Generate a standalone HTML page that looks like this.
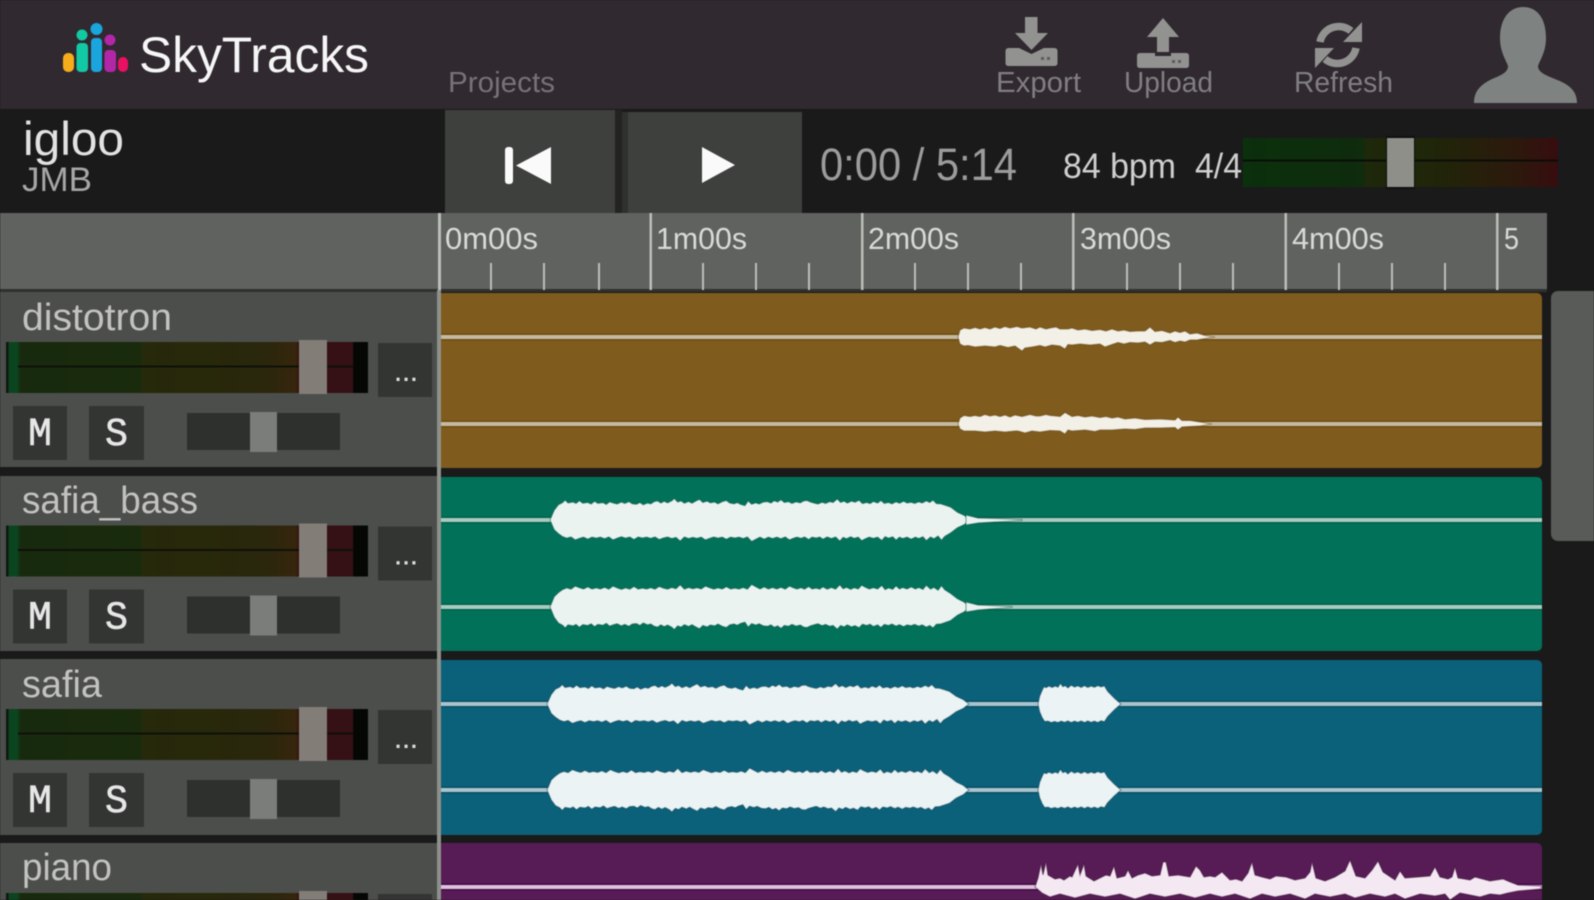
<!DOCTYPE html>
<html lang="en">
<head>
<meta charset="utf-8">
<title>SkyTracks</title>
<style>
html,body{margin:0;padding:0;background:#1a1a1a;width:1594px;height:900px;overflow:hidden}
svg{display:block;position:absolute;left:0;top:0;width:1594px;height:900px;filter:blur(.65px)}
text{font-family:"Liberation Sans",sans-serif}
path{vector-effect:non-scaling-stroke}
.nm{fill:#c2c3c0;font-size:38px}
.rl{fill:#d8dad7;font-size:31px}
.hd{fill:#807f80;font-size:29px}
.bt{fill:#e6e6e6;font-size:40px;font-family:"Liberation Mono",monospace;stroke:#e6e6e6;stroke-width:.6px}
.dt{fill:#dcdcdc;font-size:22px;font-weight:bold}
</style>
</head>
<body>
<svg width="1594" height="900" viewBox="0 0 1594 900" xmlns="http://www.w3.org/2000/svg">
<defs>
<linearGradient id="mg" x1="0" x2="1" y1="0" y2="0">
<stop offset="0" stop-color="#111611"/><stop offset=".006" stop-color="#111611"/><stop offset=".008" stop-color="#0b4520"/><stop offset=".03" stop-color="#0b4520"/><stop offset=".04" stop-color="#182a0e"/><stop offset=".37" stop-color="#1a2b0d"/><stop offset=".38" stop-color="#27290b"/><stop offset=".72" stop-color="#2a270c"/><stop offset=".8" stop-color="#36260d"/><stop offset=".81" stop-color="#351014"/><stop offset=".958" stop-color="#351014"/><stop offset=".96" stop-color="#040704"/><stop offset="1" stop-color="#040704"/>
</linearGradient>
<linearGradient id="tg" x1="0" x2="1" y1="0" y2="0">
<stop offset="0" stop-color="#0b300c"/><stop offset=".38" stop-color="#0f2c0d"/><stop offset=".39" stop-color="#1e280a"/><stop offset=".6" stop-color="#1f2609"/><stop offset=".85" stop-color="#2c1a0c"/><stop offset="1" stop-color="#370d0f"/>
</linearGradient>
<path id="jag" d="M0,0 L1,-5 2,-7.8 3,-8.9 3.6,-10.2 4.300,-8.700 5.500,-9.200 6.200,-8.500 7,-9.900 7.800,-8.600 9,-9 9.800,-8.200 10.600,-9.600 11.400,-8.500 12.600,-8.900 13.400,-8 14.200,-9.300 15.200,-8.600 16,-8.200 17,-9.200 17.800,-8.500 18.800,-9.400 19.600,-8.300 20.600,-8.100 21.400,-9 22.200,-7.800 23.200,-8.700 24,-8.300 24.800,-9.400 25.600,-9.800 26.400,-8.700 27.200,-9.600 28,-8.800 29,-9.900 29.600,-11 30.400,-9.200 31.200,-9.800 32,-8.600 33,-9.500 33.800,-8.600 34.800,-9.800 35.600,-10.600 36.400,-9 37.400,-9.700 38.200,-8.800 39.200,-9.200 40,-8.300 41,-9.400 42,-10 42.800,-8.700 43.800,-8.300 44.600,-8.900 45.400,-8 46.400,-7.400 47.200,-9.800 48,-8.100 49,-8.800 49.800,-8.200 50.800,-9.200 51.800,-9.400 52.600,-8.700 53.400,-9.900 54.200,-9.200 55,-10.400 55.800,-9 56.800,-9.400 57.600,-8.500 58.600,-9.300 59.600,-8.800 60.400,-9.800 61.200,-10 62,-9.200 63,-8.600 63.800,-8.200 64.800,-9.100 65.600,-8.500 66.600,-9.400 67.400,-9 68.400,-10.800 69.200,-9 70,-9.700 70.800,-8.700 71.800,-9.700 72.600,-9.100 73.600,-10.100 74.400,-8.400 75.400,-9 76.200,-8.400 77,-9.500 78,-8.700 78.800,-10 79.600,-8.500 80.600,-9 81.400,-8.300 82.400,-9.300 83.200,-8.600 84.200,-9.600 85,-8.700 86,-9.100 86.800,-8.500 87.800,-9.300 88.600,-8.700 89.600,-9.800 90.400,-9 91.200,-10.200 92,-8.400 93,-8.300 94,-7.600 95.400,-6.600 97,-4 98.600,-2.400 100,0 L98.600,2.400 97,4 95.400,6.600 94,8.400 93.200,10.400 92.400,8.200 91.400,9.600 90.600,8.700 89.600,10.600 88.800,8.600 87.800,9.500 87,8.800 86,9.800 85,8.800 84,9.500 83.200,8.800 82.400,10.300 81.600,8.600 80.600,9.300 79.800,8.500 79,10.500 78,8.800 77,9.400 76,8.800 75,9.700 74.200,10.600 73.400,8.800 72.400,9.400 71.600,8.600 70.600,9.600 69.800,8.900 69,10.800 68,8.700 67,9.500 66,8.700 65,9.800 64.200,8.700 63.400,9.200 62.400,8.800 61.600,10 60.600,8.700 59.800,9.400 58.800,8.800 58,9.300 57,10.200 56,8.700 55,9.600 54,8.800 53,9.500 52,8.800 51,9.800 50,8.800 49,9.900 48,11 47,8.700 46,9.500 45,8.800 44,9.200 43,8.800 42,9.900 41,8.800 40,9.300 39,8.700 38,9.400 37,10.200 36,8.800 35,9.400 34,8.900 33,9.500 32,8.700 31,10.800 30,8.900 29,9.500 28,8.700 27,9.200 26,10 25,8.700 24,9.400 23,8.800 22,9.200 21,8.700 20,10 19,8.700 18,9.300 17,8.600 16,9.300 15,10.200 14,8.700 13,9.600 12,8.800 11,9.300 10,8.800 9,9.800 8,8.800 7,9.400 6,10.200 5,8.700 4,9.300 3,8.500 2,7 1,5 Z"/>
<path id="short" d="M0,0 L2,-4 5,-7 7,-8.800 10,-8.400 13,-9.200 17,-8.500 21,-9.200 24,-8.600 27,-10.600 30,-8.900 33,-9.400 36,-8.300 40,-9.600 44,-8.700 48,-9.300 52,-8.500 56,-9.400 60,-8.500 64,-9.200 68,-8.600 72,-9.400 76,-8.800 80,-9.300 84,-6.500 92,-3 100,0 L92,3 84,6.500 80,9.100 76,8.600 72,9.500 68,8.800 64,9.400 60,8.700 56,9.500 52,8.700 48,9.400 44,8.800 40,9.500 36,8.700 32,9.400 28,8.800 24,9.500 20,9 16,9.500 12,8.800 8,9 5,7 2,4 Z"/>
<g id="ctl">
<rect x="6" y="342" width="362" height="51" fill="url(#mg)"/>
<rect x="18" y="365.500" width="335" height="2" fill="#0e1109"/>
<rect x="299" y="340" width="28" height="54" fill="#837d78"/>
<rect x="378" y="343" width="54" height="54" fill="#333533"/>
<rect x="13" y="406" width="54" height="54" fill="#333533"/>
<rect x="89" y="406" width="55" height="54" fill="#333533"/>
<rect x="187" y="413" width="153" height="37" fill="#2d302d"/>
<rect x="250" y="412" width="27" height="40" fill="#7a7d79"/>
</g>
</defs>

<!-- backgrounds -->
<rect width="1594" height="900" fill="#1a1a1a"/>
<rect width="1594" height="109" fill="#302930"/>

<!-- logo -->
<g>
<rect x="63" y="53" width="11" height="19" rx="5" fill="#f5ad1c"/>
<circle cx="82" cy="35" r="5.500" fill="#11c9a4"/><rect x="76.500" y="43" width="11.500" height="29" rx="4" fill="#11c9a4"/>
<circle cx="96.500" cy="29" r="6" fill="#1aa5dc"/><rect x="91" y="38" width="11" height="34" rx="4" fill="#1aa5dc"/>
<circle cx="110" cy="40" r="5.500" fill="#b226a8"/><rect x="104.500" y="50" width="11.500" height="22" rx="4" fill="#b226a8"/>
<rect x="118" y="57" width="10" height="15" rx="5" fill="#ec1063"/>
</g>
<text x="139" y="72" font-size="50" fill="#f6f6f6" textLength="230" lengthAdjust="spacingAndGlyphs">SkyTracks</text>
<text x="448" y="92" class="hd" style="fill:#767377" textLength="107" lengthAdjust="spacingAndGlyphs">Projects</text>

<!-- export icon -->
<path d="M1025,17 H1037.500 V33 H1048 L1031.500,50 L1015,33 H1025 Z" fill="#929391"/>
<path d="M1005.500,51 Q1005.500,48 1009,48 H1019 L1031.500,54 L1044,48 H1054 Q1057.500,48 1057.500,51 V63 Q1057.500,66 1054,66 H1009 Q1005.500,66 1005.500,63 Z" fill="#929391"/>
<rect x="1041" y="57" width="3" height="3" fill="#5d5d5c"/><rect x="1047" y="57" width="3" height="3" fill="#5d5d5c"/>
<text x="996" y="92" class="hd" textLength="85" lengthAdjust="spacingAndGlyphs">Export</text>
<!-- upload icon -->
<path d="M1163,18 L1179,37 H1169 V52 H1157 V37 H1147 Z" fill="#929391"/>
<path d="M1137,56 Q1137,53 1140,53 H1155 V56 H1171 V53 H1186 Q1189,53 1189,56 V65 Q1189,68 1186,68 H1140 Q1137,68 1137,65 Z" fill="#929391"/>
<rect x="1172" y="60" width="3" height="3" fill="#5d5d5c"/><rect x="1178" y="60" width="3" height="3" fill="#5d5d5c"/>
<text x="1124" y="92" class="hd" textLength="89" lengthAdjust="spacingAndGlyphs">Upload</text>
<!-- refresh icon -->
<path d="M1320,42 A19,19 0 0 1 1351,31" fill="none" stroke="#929391" stroke-width="7.500"/>
<path d="M1362,22 V42 H1343 Z" fill="#929391"/>
<path d="M1356,48 A19,19 0 0 1 1325,59" fill="none" stroke="#929391" stroke-width="7.500"/>
<path d="M1315,68 V48 H1334 Z" fill="#929391"/>
<text x="1294" y="92" class="hd" textLength="99" lengthAdjust="spacingAndGlyphs">Refresh</text>
<!-- avatar -->
<path d="M1500,38 C1500,18 1510,7 1523,7 C1537,7 1546,18 1546,38 C1546,52 1540,60 1538,66 C1538,72 1545,75 1555,79 C1568,84 1577,90 1577,103 L1474,103 C1474,90 1482,84 1492,79 C1502,75 1508,72 1508,66 C1506,60 1500,52 1500,38 Z" fill="#7e8280"/>

<!-- project title -->
<text x="23" y="155" font-size="47" fill="#e2e2e2" textLength="101" lengthAdjust="spacingAndGlyphs">igloo</text>
<text x="22" y="191" font-size="34" fill="#a6a6a6" textLength="70" lengthAdjust="spacingAndGlyphs">JMB</text>

<!-- transport -->
<rect x="445" y="110" width="170" height="103" fill="#3d403c"/>
<rect x="615" y="110" width="7" height="103" fill="#232422"/>
<rect x="622" y="112" width="6" height="101" fill="#2f312e"/>
<rect x="628" y="112" width="174" height="101" fill="#3d403c"/>
<rect x="505" y="147" width="8" height="37" rx="3" fill="#fafafa"/>
<path d="M516,165.500 L551,147 V184 Z" fill="#fafafa"/>
<path d="M702,147 L735,165 L702,183 Z" fill="#fafafa"/>
<text x="820" y="180" font-size="45" fill="#9c9c9c" textLength="197" lengthAdjust="spacingAndGlyphs">0:00 / 5:14</text>
<text x="1063" y="178" font-size="35" fill="#cfcfcf" textLength="113" lengthAdjust="spacingAndGlyphs">84 bpm</text>
<text x="1195" y="178" font-size="35" fill="#cfcfcf" textLength="47" lengthAdjust="spacingAndGlyphs">4/4</text>
<rect x="1243" y="138" width="315" height="49" fill="url(#tg)"/>
<rect x="1243" y="159.500" width="315" height="2" fill="#0b0d08"/>
<rect x="1386" y="136" width="29" height="53" fill="#0f0f0f"/>
<rect x="1387" y="138" width="27" height="49" fill="#8d8f88"/>

<!-- ruler -->
<rect x="0" y="213" width="1547" height="76" fill="#5f625e"/>
<rect x="0" y="289" width="1547" height="3" fill="#2f312e"/>
<g fill="#bcbeba">
<rect x="438" y="213" width="3" height="77"/><rect x="649.500" y="213" width="2.500" height="77"/><rect x="861" y="213" width="2.500" height="77"/><rect x="1072" y="213" width="2.500" height="77"/><rect x="1284.500" y="213" width="2.500" height="77"/><rect x="1496" y="213" width="2.500" height="77"/>
<rect x="490" y="263" width="2" height="27"/><rect x="543" y="263" width="2" height="27"/><rect x="598" y="263" width="2" height="27"/>
<rect x="702" y="263" width="2" height="27"/><rect x="755" y="263" width="2" height="27"/><rect x="808" y="263" width="2" height="27"/>
<rect x="914" y="263" width="2" height="27"/><rect x="967" y="263" width="2" height="27"/><rect x="1020" y="263" width="2" height="27"/>
<rect x="1126" y="263" width="2" height="27"/><rect x="1179" y="263" width="2" height="27"/><rect x="1232" y="263" width="2" height="27"/>
<rect x="1338" y="263" width="2" height="27"/><rect x="1391" y="263" width="2" height="27"/><rect x="1444" y="263" width="2" height="27"/>
</g>
<text x="445" y="249" class="rl" textLength="93" lengthAdjust="spacingAndGlyphs">0m00s</text>
<text x="656" y="249" class="rl" textLength="91" lengthAdjust="spacingAndGlyphs">1m00s</text>
<text x="868" y="249" class="rl" textLength="91" lengthAdjust="spacingAndGlyphs">2m00s</text>
<text x="1080" y="249" class="rl" textLength="91" lengthAdjust="spacingAndGlyphs">3m00s</text>
<text x="1292" y="249" class="rl" textLength="92" lengthAdjust="spacingAndGlyphs">4m00s</text>
<text x="1504" y="249" class="rl" textLength="15" lengthAdjust="spacingAndGlyphs">5</text>

<!-- scrollbar -->
<path d="M1551,298 a7,7 0 0 1 7,-7 H1594 V541 H1558 a7,7 0 0 1 -7,-7 Z" fill="#585b58"/>

<!-- track panels -->
<rect x="0" y="292" width="437" height="175" fill="#4c4e4b"/>
<rect x="0" y="476" width="437" height="175" fill="#4c4e4b"/>
<rect x="0" y="659" width="437" height="176" fill="#4c4e4b"/>
<rect x="0" y="843" width="437" height="57" fill="#4c4e4b"/>
<rect x="437" y="290" width="4" height="610" fill="#8d908b"/>

<!-- track 1 -->
<text x="22" y="330" class="nm" textLength="150" lengthAdjust="spacingAndGlyphs">distotron</text>
<use href="#ctl"/>
<text x="395" y="381" class="dt" textLength="22" lengthAdjust="spacing">...</text>
<text x="28" y="445" class="bt" textLength="24" lengthAdjust="spacingAndGlyphs">M</text>
<text x="105" y="445" class="bt" textLength="23" lengthAdjust="spacingAndGlyphs">S</text>
<!-- track 2 -->
<text x="22" y="513" class="nm" textLength="176" lengthAdjust="spacingAndGlyphs">safia_bass</text>
<use href="#ctl" y="183.500"/>
<text x="395" y="564.500" class="dt" textLength="22" lengthAdjust="spacing">...</text>
<text x="28" y="628.500" class="bt" textLength="24" lengthAdjust="spacingAndGlyphs">M</text>
<text x="105" y="628.500" class="bt" textLength="23" lengthAdjust="spacingAndGlyphs">S</text>
<!-- track 3 -->
<text x="22" y="697" class="nm" textLength="80" lengthAdjust="spacingAndGlyphs">safia</text>
<use href="#ctl" y="367"/>
<text x="395" y="748" class="dt" textLength="22" lengthAdjust="spacing">...</text>
<text x="28" y="812" class="bt" textLength="24" lengthAdjust="spacingAndGlyphs">M</text>
<text x="105" y="812" class="bt" textLength="23" lengthAdjust="spacingAndGlyphs">S</text>
<!-- track 4 -->
<text x="22" y="880" class="nm" textLength="90" lengthAdjust="spacingAndGlyphs">piano</text>
<use href="#ctl" y="551"/>

<!-- clips -->
<path d="M441,293 H1537 a5,5 0 0 1 5,5 V463 a5,5 0 0 1 -5,5 H441 Z" fill="#7f5b1e"/>
<path d="M441,477 H1537 a5,5 0 0 1 5,5 V646 a5,5 0 0 1 -5,5 H441 Z" fill="#017259"/>
<path d="M441,660 H1537 a5,5 0 0 1 5,5 V830 a5,5 0 0 1 -5,5 H441 Z" fill="#0b617a"/>
<path d="M441,843 H1537 a5,5 0 0 1 5,5 V900 H441 Z" fill="#571c55"/>

<!-- center lines -->
<g>
<rect x="441" y="333.500" width="1101" height="7" fill="#6f4c0e"/><rect x="441" y="335" width="1101" height="4" fill="#c4baa3"/>
<rect x="441" y="420.500" width="1101" height="7" fill="#6f4c0e"/><rect x="441" y="422" width="1101" height="4" fill="#c4baa3"/>
<rect x="441" y="516.500" width="1101" height="7" fill="#016049"/><rect x="441" y="518" width="1101" height="4" fill="#a8cbc0"/>
<rect x="441" y="603.500" width="1101" height="7" fill="#016049"/><rect x="441" y="605" width="1101" height="4" fill="#a8cbc0"/>
<rect x="441" y="700.500" width="1101" height="7" fill="#084f66"/><rect x="441" y="702" width="1101" height="4" fill="#a9c4cd"/>
<rect x="441" y="786.500" width="1101" height="7" fill="#084f66"/><rect x="441" y="788" width="1101" height="4" fill="#a9c4cd"/>
<rect x="441" y="883.500" width="1101" height="7" fill="#47084a"/><rect x="441" y="885" width="1101" height="4" fill="#dbc4da"/>
</g>

<!-- track 1 waves -->
<g fill="#f3f0e8" stroke="#5d3f0a" stroke-opacity=".45" stroke-width="1.200">
<path d="M958,337 L960,330 964,328 970,329 975,327.500 980,329 985,327.500 990,329 995,327 1000,328.500 1005,326.500 1010,328 1017,326.500 1022,328 1030,327 1036,329 1040,327 1046,329 1050,328 1056,327 1060,329 1068,329 1072,328 1078,330 1085,329 1092,330.500 1100,329.500 1106,331 1112,329 1118,331 1124,330 1130,331.500 1138,331 1145,331 1150,327 1155,331.500 1162,330.500 1170,333 1175,331 1180,332.500 1185,331 1190,334 1197,333 1205,335.500 1215,337 1205,338.500 1197,340 1190,340 1185,342 1180,341 1175,342.500 1170,340.500 1162,342.500 1155,342 1150,345 1145,342 1138,343 1130,342.500 1124,344 1118,342.500 1112,344.500 1105,347 1100,344 1090,345 1080,344 1072,345 1068,344.500 1065,349 1060,346 1052,345 1045,347 1040,345.500 1032,347 1025,348 1022,351 1015,346 1008,347.500 1000,345.500 995,347 985,346 975,347 968,345.500 964,346 960,344 Z"/>
<path d="M958,424 L960,418 964,415.500 970,416.500 975,415.500 980,416.500 985,414.500 990,416 995,415 1000,416.500 1005,415 1010,417 1015,415 1022,416.500 1030,414.500 1036,416 1040,416 1046,414.500 1050,415.500 1056,416 1060,416.500 1065,412.500 1072,416.500 1078,415.500 1085,417 1092,416 1100,417.500 1106,416.500 1112,418 1118,417 1125,419 1135,418 1145,419.500 1160,419 1175,420 1178,417 1182,420.500 1190,420.500 1200,422 1212,424 1200,426 1190,426.500 1182,427 1178,430 1175,427.500 1160,428 1145,428 1135,429.500 1125,429 1112,430 1100,430 1095,431.500 1085,430 1072,431 1068,430 1065,434 1060,431 1050,430.500 1040,432 1032,431 1025,433 1018,431 1015,431 1005,432 995,431 985,432 975,431 964,431 960,429 Z"/>
</g>
<!-- track 2 waves -->
<g fill="#ebf3f1" stroke="#004c3b" stroke-opacity=".45" stroke-width="1.200">
<use href="#jag" transform="translate(550,520) scale(4.200,1.950)"/>
<use href="#jag" transform="translate(550,607) scale(4.200,-2.050)"/>
<path d="M966,515 L978,518 995,518.500 1022,519.500 1022,520.500 995,522 978,523 966,525 Z"/>
<path d="M966,602 L978,605 990,605.500 1012,606.500 1012,607.500 990,609 978,610 966,612 Z"/>
</g>
<!-- track 3 waves -->
<g fill="#ebf3f4" stroke="#06394b" stroke-opacity=".45" stroke-width="1.200">
<use href="#jag" transform="translate(547,704) scale(4.220,1.900)"/>
<use href="#jag" transform="translate(547,790) scale(4.220,-2)"/>
<use href="#short" transform="translate(1038,704) scale(.83,1.950)"/>
<use href="#short" transform="translate(1038,790) scale(.83,1.950)"/>
</g>
<!-- track 4 wave -->
<path fill="#f4e9f3" stroke="#34052f" stroke-opacity=".45" stroke-width="1.200" d="M1035,887 L1038,878 1041,864 1043,875 1046,862 1048,875 1055,879 1060,878 1064,880 1070,876 1072,877 1078,864 1080,875 1084,864 1086,876 1094,881 1100,878 1106,875 1110,876 1114,866 1117,878 1125,876 1128,870 1132,878 1138,875 1145,873 1152,876 1160,875 1163,862 1166,862 1169,876 1178,875 1190,877 1196,866 1200,870 1204,877 1210,876 1215,877 1222,872 1230,880 1236,879 1242,881 1248,873 1252,862 1255,875 1262,877 1270,879 1276,876 1286,877 1295,880 1305,878 1310,872 1312,862 1316,878 1325,881 1335,877 1345,871 1350,860 1356,876 1365,878 1372,870 1378,861 1383,872 1395,880 1400,871 1405,878 1418,877 1430,876 1435,867 1440,877 1448,879 1452,877 1455,867 1458,878 1470,880 1475,877 1490,881 1503,879 1510,882 1518,885 1541,886 1541,889 1518,891 1508,893 1500,895 1490,894 1480,897 1470,895 1460,893 1450,900 1445,894 1435,896 1420,894 1405,899 1395,894 1385,897 1370,894 1355,898 1345,894 1330,897 1315,894 1305,899 1290,894 1275,897 1262,894 1250,899 1235,894 1222,897 1210,894 1195,898 1180,894 1165,897 1150,894 1135,899 1120,894 1105,897 1090,894 1075,898 1060,894 1050,897 1042,893 Z"/>
</svg>
</body>
</html>
